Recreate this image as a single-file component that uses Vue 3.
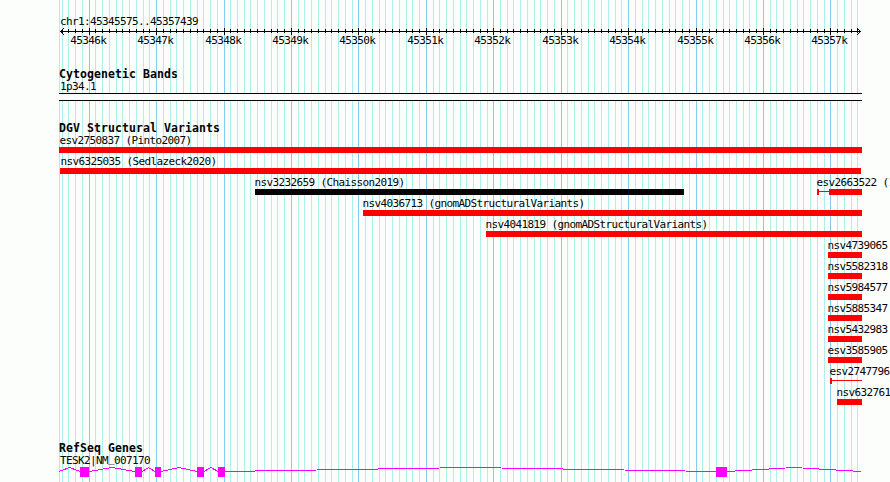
<template>
  <main class="browser">
    <svg class="grid" width="890" height="482" shape-rendering="crispEdges">
      <rect x="59" y="0" width="1" height="482" class="grid-minor" />
      <rect
        v-for="t in ticks"
        :key="t.pos"
        :x="t.x"
        y="0"
        width="1"
        height="482"
        :class="t.major ? 'grid-major' : 'grid-minor'"
      />
    </svg>

    <header class="ruler">
      <div class="label">chr1:45345575..45357439</div>
      <svg class="ruler-axis" width="890" height="22" shape-rendering="crispEdges">
        <rect x="60" y="5" width="801" height="1" />
        <rect
          v-for="t in ticks"
          :key="t.pos"
          :x="t.x"
          :y="t.major ? 2 : 3"
          width="1"
          :height="t.major ? 7 : 4"
        />
        <path class="arrow" d="M64 2L60.5 5.5L64 9M857 2L860.5 5.5L857 9" />
        <text v-for="t in majorTicks" :key="t.pos" :x="t.x - 18.7" y="18" class="tick-text">{{ t.pos / 1000 }}k</text>
      </svg>
    </header>

    <section class="track track--bands">
      <h2>Cytogenetic Bands</h2>
      <div class="label">1p34.1</div>
      <div class="band"></div>
    </section>

    <section class="track track--variants">
      <h2>DGV Structural Variants</h2>
      <div class="lanes">
        <div v-for="(lane, i) in lanes" :key="i" class="lane">
          <div v-for="v in lane" :key="v.id" class="variant" :style="{ left: `${v.start}px` }">
            <div class="label" :class="{ 'label--edge': v.start <= 60 }">{{ v.id }}{{ v.study ? ` (${v.study}` : "" }}</div>
            <svg class="glyph" :width="v.end - v.start" height="6" shape-rendering="crispEdges">
              <template v-if="v.thick !== undefined">
                <rect x="0" y="0" width="2" height="6" />
                <rect x="0" y="2" :width="v.end - v.start" height="1" />
                <rect :x="v.thick - v.start" y="0" :width="v.end - v.thick" height="6" />
              </template>
              <rect v-else x="0" y="0" :width="v.end - v.start" height="6" :class="{ neutral: v.neutral }" />
            </svg>
          </div>
        </div>
      </div>
    </section>

    <section class="track track--genes">
      <h2>RefSeq Genes</h2>
      <div class="label">TESK2|NM<span class="underscore">_</span>007170</div>
      <svg class="gene" width="890" height="11" shape-rendering="crispEdges">
        <polyline :points="intronPoints" />
        <rect v-for="e in exons" :key="e[0]" :x="e[0]" y="0" :width="e[1] - e[0]" height="10" />
      </svg>
    </section>
  </main>
</template>

<script setup>
import { computed } from "vue";

const START = 45345575;
const END = 45357439;
const LEFT = 60;
const WIDTH = 800;

const ticks = computed(() => {
  const out = [];
  for (let pos = Math.ceil(START / 100) * 100; pos <= END; pos += 100) {
    out.push({
      pos,
      x: Math.round(LEFT + ((pos - START) / (END - START)) * WIDTH),
      major: pos % 1000 === 0
    });
  }
  return out;
});
const majorTicks = computed(() => ticks.value.filter(t => t.major));

const lanes = [
  [{ id: "esv2750837", study: "Pinto2007)", start: 59, end: 862 }],
  [{ id: "nsv6325035", study: "Sedlazeck2020)", start: 60, end: 861 }],
  [
    { id: "nsv3232659", study: "Chaisson2019)", start: 255, end: 684, neutral: true },
    { id: "esv2663522", study: "1", start: 817, end: 862, thick: 829 }
  ],
  [{ id: "nsv4036713", study: "gnomADStructuralVariants)", start: 363, end: 862 }],
  [{ id: "nsv4041819", study: "gnomADStructuralVariants)", start: 486, end: 862 }],
  [{ id: "nsv4739065", start: 828, end: 862 }],
  [{ id: "nsv5582318", start: 828, end: 862 }],
  [{ id: "nsv5984577", start: 828, end: 862 }],
  [{ id: "nsv5885347", start: 828, end: 862 }],
  [{ id: "nsv5432983", start: 828, end: 862 }],
  [{ id: "esv3585905", start: 828, end: 862 }],
  [{ id: "esv2747796", start: 830, end: 862, thick: 862 }],
  [{ id: "nsv632761", start: 837, end: 862 }]
];

const exons = [[80, 89], [135, 142], [155, 161], [197, 204], [218, 225], [716, 727]];

// introns peak halfway between neighbouring exons
const intronPoints = computed(() => {
  const edges = [59, ...exons.flat(), 861];
  const pts = [];
  for (let i = 0; i < edges.length; i += 2) {
    const a = edges[i];
    const b = edges[i + 1];
    pts.push(`${a},4.5`, `${(a + b) / 2},0.5`, `${b},4.5`);
  }
  return pts.join(" ");
});
</script>

<style scoped>
.browser {
  position: relative;
  width: 890px;
  height: 482px;
  overflow: hidden;
  background: #fcfefc;
  color: #040204;
  font-family: "DejaVu Sans Mono", "Liberation Mono", monospace;
}

.grid {
  position: absolute;
  inset: 0;
}

.grid-minor {
  fill: #acf0ec;
}

.grid-major {
  fill: #84ceec;
}

.ruler,
.track {
  position: relative;
}

.ruler {
  height: 68px;
  padding-top: 15px;
  box-sizing: border-box;
}

.label,
.tick-text {
  font-size: 11px;
  letter-spacing: -0.622px;
}

.label {
  height: 11px;
  line-height: 13px;
  padding-left: 60px;
  white-space: pre;
}

.underscore {
  position: relative;
  top: -2px;
}

.ruler-axis,
.gene {
  display: block;
}

.arrow {
  fill: none;
  stroke: #040204;
  stroke-linecap: square;
}

h2 {
  height: 12px;
  margin: 0;
  padding-left: 59px;
  font-size: 11.5px;
  line-height: 13px;
  letter-spacing: 0.077px;
}

.track--bands {
  height: 54px;
}

.band {
  width: 803px;
  height: 8px;
  margin: 2px 0 0 59px;
  box-sizing: border-box;
  border: solid #040204;
  border-width: 1px 0;
  background: #fcfefc;
}

.track--variants {
  height: 320px;
}

.lane {
  position: relative;
  height: 21px;
}

.variant {
  position: absolute;
  top: 0;
}

.variant .label {
  margin-left: -0.6px;
  padding-left: 0;
}

.variant .label--edge {
  padding-left: 1px;
}

.glyph {
  display: block;
  margin-top: 2px;
  fill: #fc0204;
}

.glyph .neutral {
  fill: #040204;
}

.gene {
  margin-top: 2px;
}

.gene rect {
  fill: #fc02fc;
}

.gene polyline {
  fill: none;
  stroke: #fc02fc;
}
</style>
